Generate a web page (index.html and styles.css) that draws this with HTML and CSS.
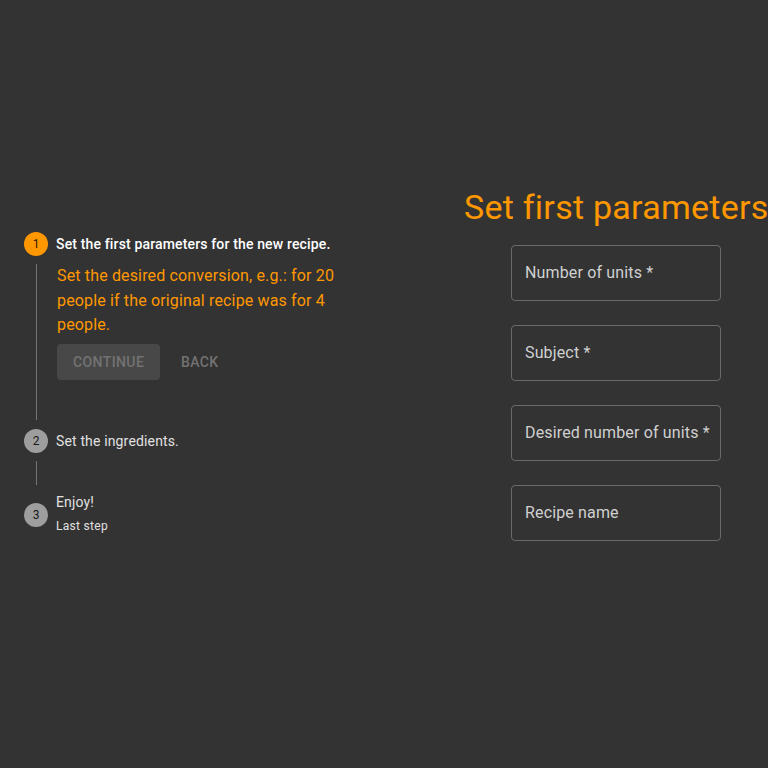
FILE: index.html
```html
<!DOCTYPE html>
<html>
<head>
<meta charset="utf-8">
<link rel="stylesheet" href="styles.css">
</head>
<body>
<div class="page">
  <div class="left">
    <div class="stepper">
      <div class="step">
        <div class="step-head">
          <span class="icon active">1</span>
          <span class="label strong">Set the first parameters for the new recipe.</span>
        </div>
        <div class="step-body">
          <p class="desc">Set the desired conversion, e.g.: for 20 people if the original recipe was for 4 people.</p>
          <div class="actions">
            <button class="btn btn-continue">CONTINUE</button>
            <button class="btn btn-back">BACK</button>
          </div>
        </div>
      </div>
      <div class="step">
        <div class="step-head">
          <span class="icon">2</span>
          <span class="label">Set the ingredients.</span>
        </div>
        <div class="connector"></div>
      </div>
      <div class="step">
        <div class="step-head">
          <span class="icon">3</span>
          <span class="label-group">
            <span class="label">Enjoy!</span>
            <span class="caption">Last step</span>
          </span>
        </div>
      </div>
    </div>
  </div>
  <div class="right">
    <h1 class="title">Set first parameters</h1>
    <div class="fields">
      <div class="field">Number of units *</div>
      <div class="field">Subject *</div>
      <div class="field">Desired number of units *</div>
      <div class="field">Recipe name</div>
    </div>
  </div>
</div>
</body>
</html>
```
FILE: styles.css
```css
html, body {
  margin: 0;
  padding: 0;
  background: #333333;
  font-family: Roboto, "Liberation Sans", Arial, sans-serif;
  overflow: hidden;
}
.page {
  width: 768px;
  height: 768px;
  display: flex;
}
.left {
  width: 464px;
  box-sizing: border-box;
  padding: 232px 24px 0 24px;
}
.stepper {
  display: flex;
  flex-direction: column;
}
.step-head {
  display: flex;
  align-items: center;
  gap: 8px;
}
.icon {
  width: 24px;
  height: 24px;
  border-radius: 50%;
  background: #9e9e9e;
  color: rgba(0,0,0,0.87);
  font-size: 12px;
  display: flex;
  align-items: center;
  justify-content: center;
  flex: none;
}
.icon.active {
  background: #ff9800;
}
.label {
  font-size: 14px;
  color: #e0e0e0;
  line-height: 20px;
  letter-spacing: 0.15px;
}
.label.strong {
  color: #ffffff;
  font-weight: 500;
}
.label-group {
  display: flex;
  flex-direction: column;
  gap: 5px;
  margin-top: -4px;
}
.caption {
  font-size: 12px;
  color: #e0e0e0;
  line-height: 18px;
  letter-spacing: 0.3px;
}
.step-body {
  margin: 8px 0 9px 12px;
  border-left: 1px solid #757575;
  padding: 0 16px 40px 20px;
}
.desc {
  margin: 0;
  width: 300px;
  color: #ff9800;
  font-size: 16px;
  line-height: 24.5px;
  letter-spacing: 0.15px;
}
.actions {
  display: flex;
  gap: 8px;
  margin-top: 6px;
}
.btn {
  font-family: inherit;
  font-size: 14px;
  font-weight: 500;
  letter-spacing: 0.4px;
  height: 36px;
  border: none;
  border-radius: 4px;
  padding: 0 16px;
  cursor: default;
}
.btn-continue {
  width: 103px;
  background: #484848;
  color: #727272;
}
.btn-back {
  background: transparent;
  color: #727272;
  padding: 0 13px;
}
.connector {
  margin: 8px 0 11px 12px;
  border-left: 1px solid #757575;
  height: 24px;
}
.right {
  flex: 1;
  display: flex;
  flex-direction: column;
  padding-top: 183px;
  min-width: 0;
}
.title {
  margin: 0;
  font-size: 34px;
  font-weight: 400;
  color: #ff9800;
  line-height: 48px;
  white-space: nowrap;
  letter-spacing: 0.25px;
}
.fields {
  display: flex;
  flex-direction: column;
  gap: 24px;
  margin-top: 14px;
  margin-left: 47px;
}
.field {
  width: 210px;
  height: 56px;
  box-sizing: border-box;
  border: 1px solid #6a6a6a;
  border-radius: 4px;
  padding: 0 13px;
  padding-bottom: 2px;
  display: flex;
  align-items: center;
  font-size: 16px;
  letter-spacing: 0.15px;
  color: #d0d0d0;
  white-space: nowrap;
}
```
